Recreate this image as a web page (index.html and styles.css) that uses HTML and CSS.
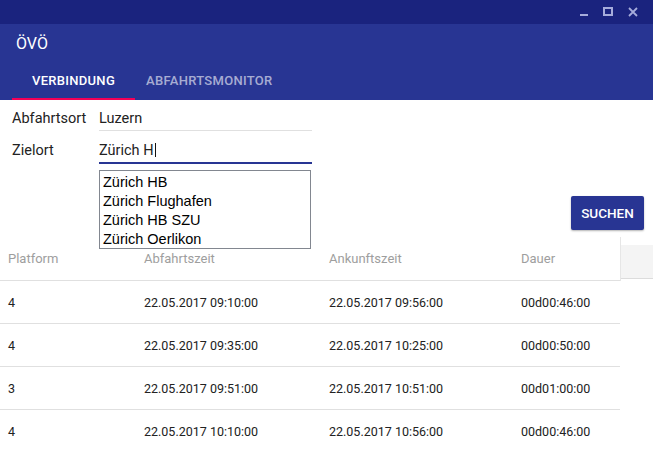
FILE: index.html
```html
<!DOCTYPE html>
<html lang="de">
<head>
<meta charset="utf-8">
<title>ÖVÖ</title>
<link rel="stylesheet" href="styles.css">
</head>
<body>
<div class="window">
  <div class="titlebar">
    <svg class="wi wi-min" width="8" height="9" viewBox="0 0 8 9"><rect x="0" y="7" width="8" height="2" fill="currentColor"/></svg>
    <svg class="wi wi-max" width="10" height="9" viewBox="0 0 10 9"><rect x="1" y="1" width="8" height="7" fill="none" stroke="currentColor" stroke-width="2"/></svg>
    <svg class="wi wi-close" width="10" height="10" viewBox="0 0 10 10"><path d="M1 1 L9 9 M9 1 L1 9" stroke="currentColor" stroke-width="1.8" fill="none"/></svg>
  </div>
  <header class="appbar">
    <div class="app-title">ÖVÖ</div>
    <nav class="tabs">
      <div class="tab tab-active">VERBINDUNG</div>
      <div class="tab tab-inactive">ABFAHRTSMONITOR</div>
    </nav>
  </header>
  <main class="content">
    <div class="form">
      <div class="form-row">
        <label class="label">Abfahrtsort</label>
        <div class="field">Luzern</div>
      </div>
      <div class="form-row form-row-focus">
        <label class="label">Zielort</label>
        <div class="field field-focus">Zürich H<span class="caret"></span></div>
      </div>
      <ul class="suggest">
        <li>Zürich HB</li>
        <li>Zürich Flughafen</li>
        <li>Zürich HB SZU</li>
        <li>Zürich Oerlikon</li>
      </ul>
    </div>
    <div class="actions">
      <button class="btn">SUCHEN</button>
    </div>
    <div class="table">
      <div class="thead">
        <div class="row head-row">
          <div>Platform</div>
          <div>Abfahrtszeit</div>
          <div>Ankunftszeit</div>
          <div>Dauer</div>
        </div>
        <div class="filler"><div class="filler-box"></div></div>
      </div>
      <div class="row data-row"><div>4</div><div>22.05.2017 09:10:00</div><div>22.05.2017 09:56:00</div><div>00d00:46:00</div></div>
      <div class="row data-row"><div>4</div><div>22.05.2017 09:35:00</div><div>22.05.2017 10:25:00</div><div>00d00:50:00</div></div>
      <div class="row data-row"><div>3</div><div>22.05.2017 09:51:00</div><div>22.05.2017 10:51:00</div><div>00d01:00:00</div></div>
      <div class="row data-row"><div>4</div><div>22.05.2017 10:10:00</div><div>22.05.2017 10:56:00</div><div>00d00:46:00</div></div>
    </div>
  </main>
</div>
</body>
</html>
```
FILE: styles.css
```css
* { box-sizing: border-box; }
html, body { margin: 0; padding: 0; }
body {
  width: 653px;
  height: 451px;
  overflow: hidden;
  background: #fff;
  font-family: Roboto, "Liberation Sans", sans-serif;
}
.window { width: 653px; }

.titlebar {
  height: 24px;
  background: #1a237e;
  display: flex;
  justify-content: flex-end;
  align-items: flex-start;
  padding: 7px 15px 0 0;
  color: #a6acdb;
}
.wi { display: block; }
.wi-min { margin-right: 15px; }
.wi-max { margin-right: 15px; }

.appbar {
  background: #283593;
  height: 76px;
  display: flex;
  flex-direction: column;
}
.app-title {
  height: 40px;
  line-height: 40px;
  padding-left: 16px;
  color: #fff;
  font-size: 16px;
}
.tabs {
  display: flex;
  height: 36px;
  padding-left: 12px;
}
.tab {
  font-size: 13px;
  font-weight: 500;
  letter-spacing: 0.3px;
  line-height: 34px;
  height: 36px;
}
.tab-active {
  width: 123px;
  text-align: center;
  color: #fff;
  border-bottom: 2px solid #f50057;
}
.tab-inactive {
  padding: 0 11px;
  color: rgba(255,255,255,0.6);
}

.content { position: relative; }

.form {
  position: relative;
  padding: 8px 0 0 12px;
}
.form-row {
  display: grid;
  grid-template-columns: 87px 213px;
  height: 23px;
  align-items: stretch;
}
.form-row-focus {
  margin-top: 9px;
  height: 24px;
}
.label {
  font-size: 14.5px;
  color: #222;
  line-height: 22px;
}
.field {
  font-size: 14.5px;
  color: #222;
  line-height: 22px;
  border-bottom: 1px solid #e0e0e0;
  position: relative;
}
.field-focus {
  border-bottom: 2px solid #283593;
}
.caret {
  display: inline-block;
  width: 1px;
  height: 14px;
  background: #111;
  vertical-align: -2px;
  margin-left: 1px;
}
.suggest {
  position: absolute;
  left: 99px;
  top: 70px;
  width: 212px;
  height: 79px;
  margin: 0;
  padding: 2px 0 0 3px;
  list-style: none;
  background: #fff;
  border: 1px solid #828790;
  z-index: 5;
  font-family: "Liberation Sans", Arial, sans-serif;
  font-size: 14.5px;
  line-height: 19px;
  color: #000;
}

.actions {
  display: flex;
  justify-content: flex-end;
  padding: 32px 9px 0 0;
}
.btn {
  width: 73px;
  height: 34px;
  background: #283593;
  color: #fff;
  border: none;
  border-radius: 2px;
  font-family: Roboto, sans-serif;
  font-size: 13.5px;
  font-weight: 500;
  padding: 0;
  box-shadow: 0 1px 2px rgba(0,0,0,0.3);
}

.table {
  margin-top: 7px;
  width: 653px;
}
.thead {
  display: flex;
}
.row {
  width: 620px;
  display: grid;
  grid-template-columns: 136px 185px 192px 1fr;
  padding-left: 8px;
  align-items: center;
  border-bottom: 1px solid #e0e0e0;
}
.head-row {
  height: 44px;
  font-size: 13px;
  color: #9e9e9e;
}
.filler {
  width: 33px;
  height: 44px;
  border-left: 1px solid #e6e6e6;
  padding-top: 8px;
}
.filler-box {
  height: 34px;
  background: #f4f4f4;
  border-bottom: 1px solid #dcdcdc;
}
.data-row {
  height: 43px;
  font-size: 12.5px;
  color: #222;
}
```
